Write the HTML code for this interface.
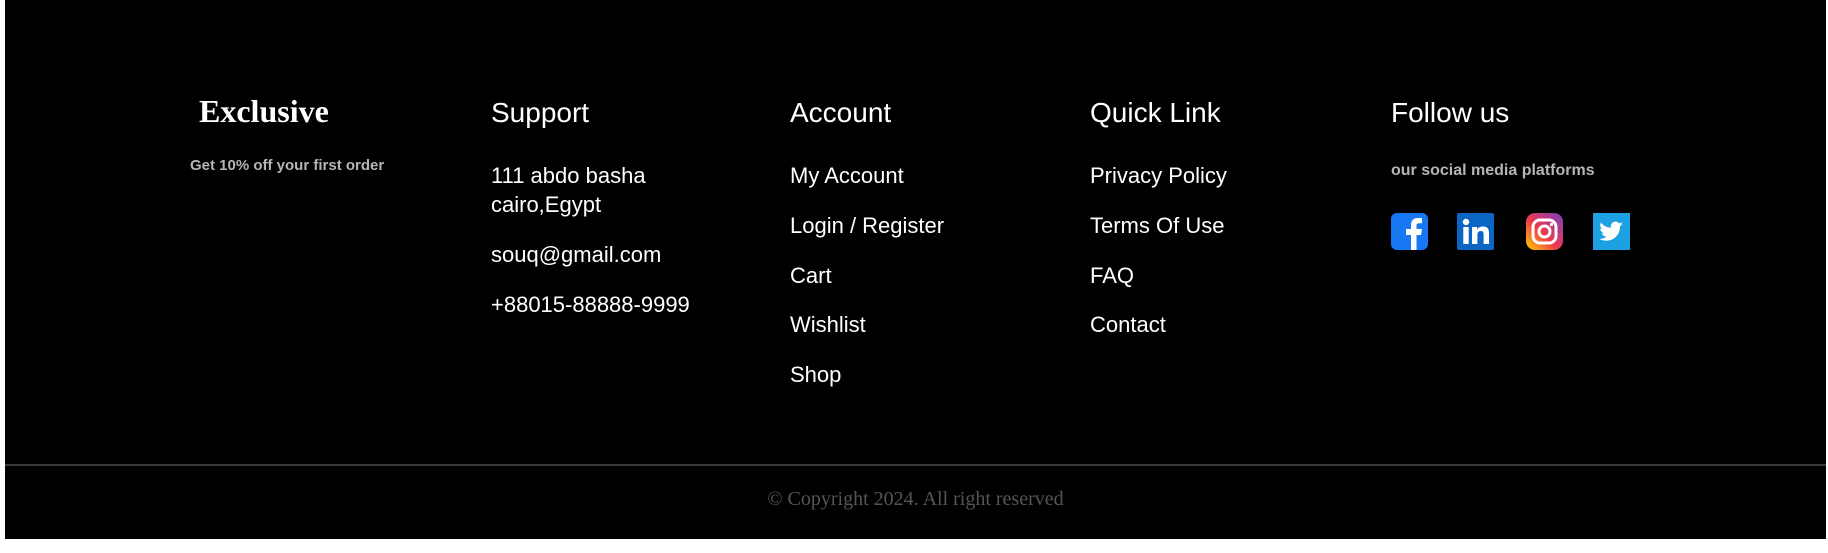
<!DOCTYPE html>
<html><head><meta charset="utf-8"><style>
html,body{margin:0;padding:0;width:1828px;height:553px;background:#fff;overflow:hidden}
.f{position:absolute;left:5px;top:0;width:1821px;height:539px;background:#000;font-family:"Liberation Sans",sans-serif;color:#fff}
.a{position:absolute;white-space:nowrap}
.h{font-size:28px;top:97px}
.i{font-size:22px}
.s{font-size:15px;color:#b5b5b5;font-weight:bold}
.line{position:absolute;left:0;top:464px;width:1821px;height:2px;background:#3a3a3a}
.ic{position:absolute;top:213px;width:37px;height:37px}
</style></head><body>
<div class="f">
<div class="a" style="left:194px;top:93px;font-family:'Liberation Serif',serif;font-weight:bold;font-size:32px">Exclusive</div>
<div class="a s" style="left:185px;top:157px">Get 10% off your first order</div>

<div class="a h" style="left:486px">Support</div>
<div class="a i" style="left:486px;top:163px">111 abdo basha</div>
<div class="a i" style="left:486px;top:192px">cairo,Egypt</div>
<div class="a i" style="left:486px;top:242px">souq@gmail.com</div>
<div class="a i" style="left:486px;top:292px">+88015-88888-9999</div>

<div class="a h" style="left:785px">Account</div>
<div class="a i" style="left:785px;top:163px">My Account</div>
<div class="a i" style="left:785px;top:213px">Login / Register</div>
<div class="a i" style="left:785px;top:263px">Cart</div>
<div class="a i" style="left:785px;top:312px">Wishlist</div>
<div class="a i" style="left:785px;top:362px">Shop</div>

<div class="a h" style="left:1085px">Quick Link</div>
<div class="a i" style="left:1085px;top:163px">Privacy Policy</div>
<div class="a i" style="left:1085px;top:213px">Terms Of Use</div>
<div class="a i" style="left:1085px;top:263px">FAQ</div>
<div class="a i" style="left:1085px;top:312px">Contact</div>

<div class="a h" style="left:1386px">Follow us</div>
<div class="a s" style="left:1386px;top:162px;font-size:16px">our social media platforms</div>

<svg class="ic" style="left:1386px" viewBox="0 0 37 37"><rect width="37" height="37" rx="6" fill="#1877f2"/><path d="M20 37V22h-5v-6h5v-4c0-5 3-7 7-7 2 0 3 0 4 .2v5h-3c-2 0-2.5 1-2.5 2.5V16h5.5l-1 6H25.5v15z" fill="#fff"/></svg>
<svg class="ic" style="left:1452px" viewBox="0 0 37 37"><rect width="37" height="37" rx="2" fill="#0a66c2"/><circle cx="9" cy="9" r="3.2" fill="#fff"/><rect x="6.3" y="14" width="5.4" height="17" fill="#fff"/><path d="M15 14h5v2.5c1-1.8 3-3 6-3 5 0 6 3 6 7V31h-5.4v-9c0-2.5-.5-4-2.8-4s-3.4 1.6-3.4 4v9H15z" fill="#fff"/></svg>
<svg class="ic" style="left:1521px" viewBox="0 0 37 37"><defs><linearGradient id="g" x1="0" y1="1" x2="1" y2="0"><stop offset="0" stop-color="#fdd100"/><stop offset=".45" stop-color="#ee3a4b"/><stop offset="1" stop-color="#7a3ec5"/></linearGradient></defs><rect width="37" height="37" rx="9" fill="url(#g)"/><rect x="7" y="7" width="23" height="23" rx="7" fill="none" stroke="#fff" stroke-width="3"/><circle cx="18.5" cy="18.5" r="5.5" fill="none" stroke="#fff" stroke-width="3"/><circle cx="25.5" cy="11.5" r="1.6" fill="#fff"/></svg>
<svg class="ic" style="left:1588px" viewBox="0 0 37 37"><rect width="37" height="37" fill="#1da1e2"/><path d="M30 11c-.9.4-1.8.6-2.8.8 1-.6 1.8-1.6 2.1-2.7-1 .6-2 1-3.1 1.2a4.8 4.8 0 0 0-8.3 4.4c-4-.2-7.6-2.1-10-5.1-1.3 2.2-.6 5 1.5 6.4-.8 0-1.5-.2-2.2-.6 0 2.3 1.6 4.3 3.9 4.8-.7.2-1.4.2-2.2.1.6 1.9 2.4 3.3 4.5 3.4A9.7 9.7 0 0 1 6 25.6 13.7 13.7 0 0 0 27 13.9v-.6c1.2-.7 2.2-1.5 3-2.300z" fill="#fff"/></svg>

<div class="line"></div>
<div class="a" style="left:0;width:1821px;text-align:center;top:488px;font-family:'Liberation Serif',serif;font-size:20px;color:#555">© Copyright 2024. All right reserved</div>
</div>
</body></html>
